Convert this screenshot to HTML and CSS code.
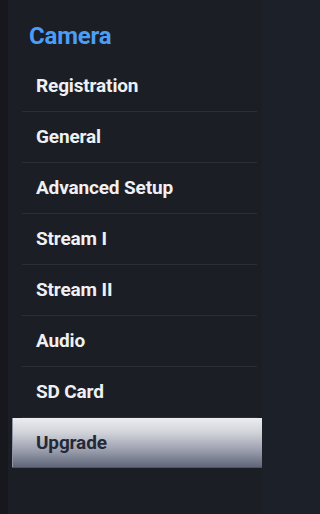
FILE: index.html
```html
<!DOCTYPE html>
<html>
<head>
<meta charset="utf-8">
<link rel="stylesheet" href="styles.css">
</head>
<body>
<div class="app">
  <div class="strip"></div>
  <nav class="sidebar">
    <h2 class="title">Camera</h2>
    <ul class="menu">
      <li class="item">Registration</li>
      <li class="item">General</li>
      <li class="item">Advanced Setup</li>
      <li class="item">Stream I</li>
      <li class="item">Stream II</li>
      <li class="item">Audio</li>
      <li class="item">SD Card</li>
      <li class="item active">Upgrade</li>
    </ul>
  </nav>
  <div class="main"></div>
</div>
</body>
</html>
```
FILE: styles.css
```css
html, body {
  margin: 0;
  padding: 0;
  height: 100%;
  background: #1c2029;
}
.app {
  display: flex;
  height: 514px;
  font-family: "Roboto", "Liberation Sans", sans-serif;
}
.strip {
  width: 8px;
  background: #16181e;
}
.sidebar {
  width: 254px;
  background: #1b1e25;
}
.main {
  flex: 1;
  background: #1c2129;
}
.title {
  margin: 0;
  padding: 22px 0 0 21px;
  height: 61px;
  box-sizing: border-box;
  font-size: 24px;
  font-weight: bold;
  color: #4b9df5;
  line-height: 28px;
  letter-spacing: -0.2px;
}
.menu {
  list-style: none;
  margin: 0;
  padding: 0 0 0 4px;
}
.item {
  position: relative;
  height: 51px;
  box-sizing: border-box;
  padding-left: 24px;
  line-height: 50px;
  font-size: 19px;
  font-weight: bold;
  color: #eef0f3;
  letter-spacing: -0.15px;
}
.item::after {
  content: "";
  position: absolute;
  left: 10px;
  right: 5px;
  bottom: 0;
  height: 1px;
  background: #2b2e35;
}
.item.active {
  height: 50px;
  color: #242938;
  background: linear-gradient(to bottom, #ecedf1 0%, #d0d2d9 30%, #9a9eac 65%, #5c6177 100%);
  box-shadow: inset 0 -1px 0 #4e5468, inset 1px 0 0 #9094a2;
}
.item.active::after {
  display: none;
}
```
